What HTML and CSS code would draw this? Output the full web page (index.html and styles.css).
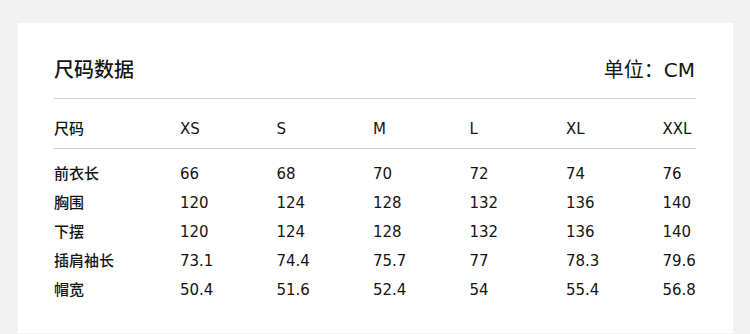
FILE: index.html
```html
<!DOCTYPE html>
<html lang="zh-CN">
<head>
    <meta charset="UTF-8">
    <meta name="viewport" content="width=device-width, initial-scale=1.0">
    <title>尺码数据</title>
    <link rel="stylesheet" href="styles.css">
</head>
<body>
    <div class="size-card">
        <div class="size-head">
            <h2>尺码数据</h2>
            <span class="unit">单位：CM</span>
        </div>
        <div class="size-row size-row-title">
            <span>尺码</span><span>XS</span><span>S</span><span>M</span><span>L</span><span>XL</span><span>XXL</span>
        </div>
        <div class="size-body">
            <div class="size-row">
                <span>前衣长</span><span>66</span><span>68</span><span>70</span><span>72</span><span>74</span><span>76</span>
            </div>
            <div class="size-row">
                <span>胸围</span><span>120</span><span>124</span><span>128</span><span>132</span><span>136</span><span>140</span>
            </div>
            <div class="size-row">
                <span>下摆</span><span>120</span><span>124</span><span>128</span><span>132</span><span>136</span><span>140</span>
            </div>
            <div class="size-row">
                <span>插肩袖长</span><span>73.1</span><span>74.4</span><span>75.7</span><span>77</span><span>78.3</span><span>79.6</span>
            </div>
            <div class="size-row">
                <span>帽宽</span><span>50.4</span><span>51.6</span><span>52.4</span><span>54</span><span>55.4</span><span>56.8</span>
            </div>
        </div>
    </div>
</body>
</html>
```

FILE: styles.css
```css
body {
    margin: 0;
    padding: 23px 17px 0 18px;
    background-color: #f2f2f2;
    color: #141414;
    font-family: 'DejaVu Sans', 'Noto Sans CJK SC', sans-serif;
}
.size-card {
    background-color: #fff;
    height: 310px;
    box-sizing: border-box;
    padding: 0 37px 0 36px;
}
.size-head {
    display: flex;
    justify-content: space-between;
    align-items: center;
    padding: 33px 0 14px;
    border-bottom: 1px solid #cfcfcf;
}
.size-head h2 {
    margin: 0;
    font-size: 20px;
    font-weight: 500;
    line-height: 28px;
}
.unit {
    font-size: 20px;
    line-height: 28px;
    margin-right: 1px;
}
.size-row {
    display: grid;
    grid-template-columns: 126px repeat(5, 96.5px) auto;
    font-size: 15px;
    line-height: 29px;
}
.size-row span:first-child {
    font-weight: 500;
}
.size-row-title {
    padding: 16px 0 4px;
    border-bottom: 1px solid #cfcfcf;
}
.size-body {
    padding-top: 11px;
}
```
